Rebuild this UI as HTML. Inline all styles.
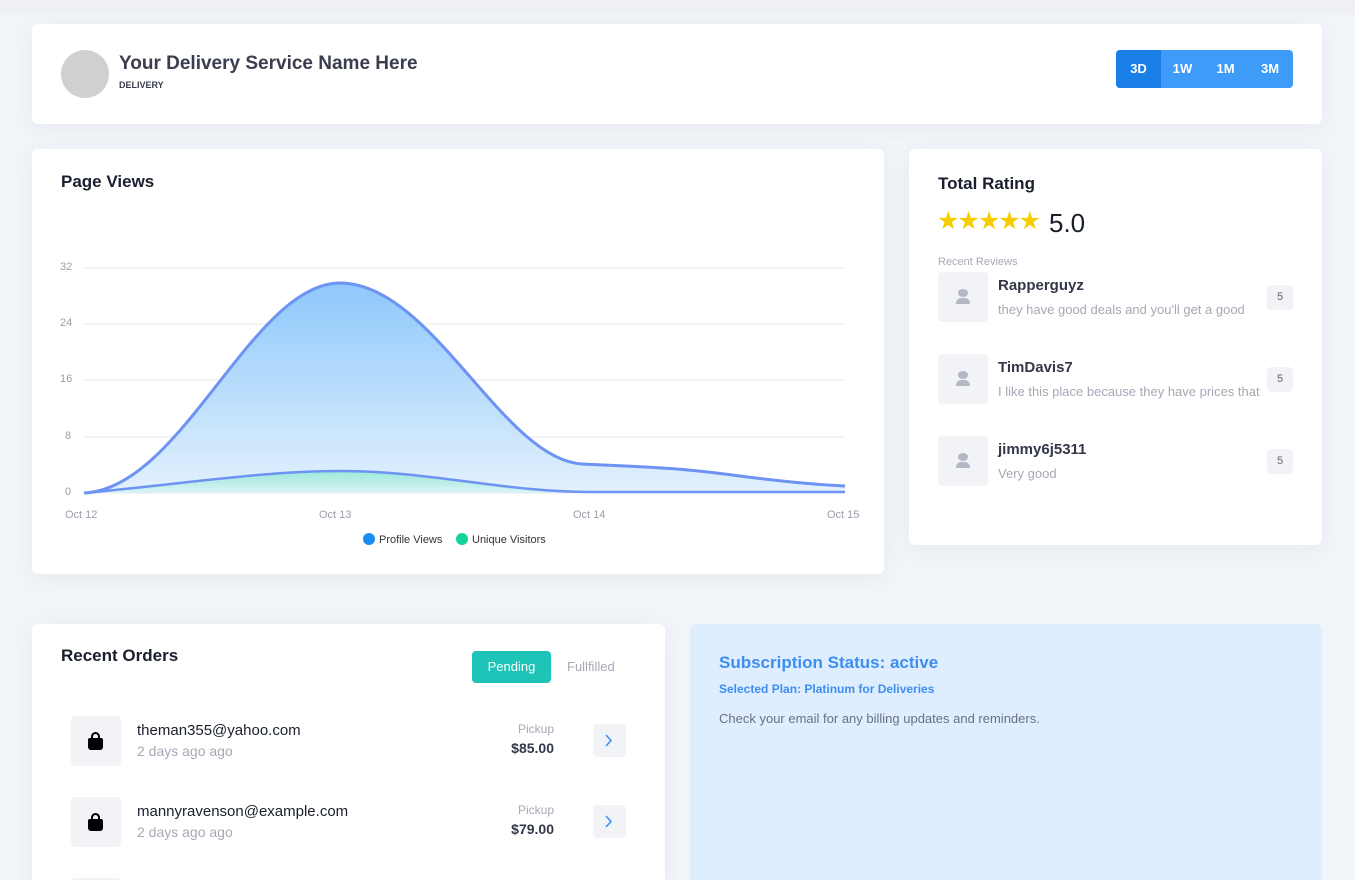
<!DOCTYPE html>
<html style="width:1355px;height:880px;overflow:hidden"><head><meta charset="utf-8"><style>
*{box-sizing:border-box;margin:0;padding:0}
body{width:1355px;height:880px;overflow:hidden;background:#f1f4f8;font-family:"Liberation Sans",sans-serif;color:#1e2633;position:relative}
.card{position:absolute;background:#fff;border-radius:6px;box-shadow:0 4px 20px rgba(60,80,120,.06)}
.h{font-size:17px;font-weight:bold;color:#1a1f2e}
.muted{color:#a6a9b6}
</style></head><body>
<div style="position:absolute;left:0;top:0;width:1355px;height:14px;background:#eef0f4"></div>
<div class="card" style="left:32px;top:24px;width:1290px;height:100px">
 <div style="position:absolute;left:29px;top:26px;width:48px;height:48px;border-radius:50%;background:#d0d0d0"></div>
 <div style="position:absolute;left:87px;top:29px;font-size:19px;font-weight:bold;color:#3a3d4e">Your Delivery Service Name Here</div>
 <div style="position:absolute;left:87px;top:56px;font-size:9px;font-weight:bold;color:#3a3d4e">DELIVERY</div>
 <div style="position:absolute;left:1084px;top:26px;width:177px;height:38px;border-radius:4px;background:#3e9cf8;display:flex;color:#fff;font-size:13px;font-weight:bold;overflow:hidden">
  <div style="width:45px;background:#1a7fe6;text-align:center;line-height:38px">3D</div>
  <div style="width:43px;text-align:center;line-height:38px">1W</div>
  <div style="width:43px;text-align:center;line-height:38px">1M</div>
  <div style="width:46px;text-align:center;line-height:38px">3M</div>
 </div>
</div>
<div class="card" style="left:32px;top:149px;width:852px;height:425px">
 <div class="h" style="position:absolute;left:29px;top:23px">Page Views</div>
 <svg style="position:absolute;left:0;top:0" width="852" height="425">
  <defs><linearGradient id="g" x1="0" y1="0" x2="0" y2="1"><stop offset="0" stop-color="#8ec8fb"/><stop offset="1" stop-color="#e3f1fd"/></linearGradient>
  <linearGradient id="g2" x1="0" y1="0" x2="0" y2="1"><stop offset="0" stop-color="#8ce8d0"/><stop offset="1" stop-color="#d8f3f4"/></linearGradient></defs>
  <g stroke="#e6e8ec" stroke-width="1">
   <line x1="52" y1="119" x2="813" y2="119"/><line x1="52" y1="175" x2="813" y2="175"/><line x1="52" y1="231" x2="813" y2="231"/><line x1="52" y1="288" x2="813" y2="288"/><line x1="52" y1="344" x2="813" y2="344"/>
  </g>
  <path d="M52,344 C150,340 220,134 308,134 C400,134 470,310 550,315 C610,318 640,318 700,326 C760,334 790,336 813,337 L813,344 Z" fill="url(#g)"/>
  <path d="M52,344 C150,340 220,134 308,134 C400,134 470,310 550,315 C610,318 640,318 700,326 C760,334 790,336 813,337" fill="none" stroke="#6d93f3" stroke-width="3"/>
  <path d="M52,344 C150,335 230,322 308,322 C400,322 470,343 559,343 L813,343 L813,344 Z" fill="url(#g2)" opacity=".8"/>
  <path d="M52,344 C150,335 230,322 308,322 C400,322 470,343 559,343 L813,343" fill="none" stroke="#6d93f3" stroke-width="2.5"/>
  <g font-size="11" fill="#9a9ea8" font-family="Liberation Sans">
   <text x="28" y="121">32</text><text x="28" y="177">24</text><text x="28" y="233">16</text><text x="33" y="290">8</text><text x="33" y="346">0</text>
   <text x="33" y="369">Oct 12</text><text x="287" y="369">Oct 13</text><text x="541" y="369">Oct 14</text><text x="795" y="369">Oct 15</text>
  </g>
  <circle cx="337" cy="390" r="6" fill="#1a8cf5"/><text x="347" y="394" font-size="11" fill="#333" font-family="Liberation Sans">Profile Views</text>
  <circle cx="430" cy="390" r="6" fill="#14d49a"/><text x="440" y="394" font-size="11" fill="#333" font-family="Liberation Sans">Unique Visitors</text>
 </svg>
</div>
<div class="card" style="left:909px;top:149px;width:413px;height:396px">
 <div class="h" style="position:absolute;left:29px;top:25px">Total Rating</div>
 <div style="position:absolute;left:28px;top:57px;font-size:25px;color:#f7cc00;letter-spacing:-2px">★★★★★</div>
 <div style="position:absolute;left:140px;top:59px;font-size:26px;color:#1a1f2e">5.0</div>
 <div style="position:absolute;left:29px;top:107px;font-size:11px" class="muted">Recent Reviews</div>
 <div style="position:absolute;left:29px;top:123px;width:380px">
  <div style="position:relative;height:82px">
   <div style="position:absolute;left:0;top:0;width:50px;height:50px;background:#f1f3f7;border-radius:4px"><div style="position:absolute;left:20px;top:17px;width:10px;height:8px;border-radius:50%;background:#b4b8c4"></div><div style="position:absolute;left:18px;top:26px;width:14px;height:6px;border-radius:6px 6px 1px 1px;background:#b4b8c4"></div></div>
   <div style="position:absolute;left:60px;top:5px;font-size:15px;font-weight:bold;color:#333748">Rapperguyz</div>
   <div style="position:absolute;left:60px;top:30px;font-size:13px;width:262px;white-space:nowrap;overflow:hidden" class="muted">they have good deals and you'll get a good</div>
   <div style="position:absolute;left:329px;top:13px;width:26px;height:25px;background:#f1f3f7;border-radius:4px;font-size:11px;color:#666;text-align:center;line-height:25px">5</div>
  </div>
  <div style="position:relative;height:82px">
   <div style="position:absolute;left:0;top:0;width:50px;height:50px;background:#f1f3f7;border-radius:4px"><div style="position:absolute;left:20px;top:17px;width:10px;height:8px;border-radius:50%;background:#b4b8c4"></div><div style="position:absolute;left:18px;top:26px;width:14px;height:6px;border-radius:6px 6px 1px 1px;background:#b4b8c4"></div></div>
   <div style="position:absolute;left:60px;top:5px;font-size:15px;font-weight:bold;color:#333748">TimDavis7</div>
   <div style="position:absolute;left:60px;top:30px;font-size:13px;width:262px;white-space:nowrap;overflow:hidden" class="muted">I like this place because they have prices that</div>
   <div style="position:absolute;left:329px;top:13px;width:26px;height:25px;background:#f1f3f7;border-radius:4px;font-size:11px;color:#666;text-align:center;line-height:25px">5</div>
  </div>
  <div style="position:relative;height:82px">
   <div style="position:absolute;left:0;top:0;width:50px;height:50px;background:#f1f3f7;border-radius:4px"><div style="position:absolute;left:20px;top:17px;width:10px;height:8px;border-radius:50%;background:#b4b8c4"></div><div style="position:absolute;left:18px;top:26px;width:14px;height:6px;border-radius:6px 6px 1px 1px;background:#b4b8c4"></div></div>
   <div style="position:absolute;left:60px;top:5px;font-size:15px;font-weight:bold;color:#333748">jimmy6j5311</div>
   <div style="position:absolute;left:60px;top:30px;font-size:13px" class="muted">Very good</div>
   <div style="position:absolute;left:329px;top:13px;width:26px;height:25px;background:#f1f3f7;border-radius:4px;font-size:11px;color:#666;text-align:center;line-height:25px">5</div>
  </div>
 </div>
</div>
<div class="card" style="left:32px;top:624px;width:633px;height:270px">
 <div class="h" style="position:absolute;left:29px;top:22px">Recent Orders</div>
 <div style="position:absolute;left:440px;top:27px;width:79px;height:32px;background:#1ec4b8;border-radius:4px;color:#fff;font-size:13px;text-align:center;line-height:32px">Pending</div>
 <div style="position:absolute;left:535px;top:35px;font-size:13px" class="muted">Fullfilled</div>
 <div style="position:absolute;left:39px;top:92px;width:50px;height:50px;background:#f1f3f7;border-radius:4px"><div style="position:absolute;left:17px;top:22px;width:15px;height:12px;background:#000;border-radius:2px 2px 3px 3px"></div><div style="position:absolute;left:20px;top:16px;width:9px;height:9px;border:2px solid #000;border-bottom:none;border-radius:5px 5px 0 0"></div></div>
 <div style="position:absolute;left:105px;top:98px;font-size:15px;color:#1a1f2e">theman355@yahoo.com</div>
 <div style="position:absolute;left:105px;top:119px;font-size:14px" class="muted">2 days ago ago</div>
 <div style="position:absolute;right:111px;top:98px;font-size:12px;text-align:right" class="muted">Pickup</div>
 <div style="position:absolute;right:111px;top:116px;font-size:14px;font-weight:bold;color:#333748">$85.00</div>
 <div style="position:absolute;left:561px;top:100px;width:33px;height:33px;background:#f1f3f7;border-radius:4px"><svg width="33" height="33"><path d="M13 11l5 5.5-5 5.5" fill="none" stroke="#3e8ef0" stroke-width="1.5"/></svg></div>
 <div style="position:absolute;left:39px;top:173px;width:50px;height:50px;background:#f1f3f7;border-radius:4px"><div style="position:absolute;left:17px;top:22px;width:15px;height:12px;background:#000;border-radius:2px 2px 3px 3px"></div><div style="position:absolute;left:20px;top:16px;width:9px;height:9px;border:2px solid #000;border-bottom:none;border-radius:5px 5px 0 0"></div></div>
 <div style="position:absolute;left:105px;top:179px;font-size:15px;color:#1a1f2e">mannyravenson@example.com</div>
 <div style="position:absolute;left:105px;top:200px;font-size:14px" class="muted">2 days ago ago</div>
 <div style="position:absolute;right:111px;top:179px;font-size:12px" class="muted">Pickup</div>
 <div style="position:absolute;right:111px;top:197px;font-size:14px;font-weight:bold;color:#333748">$79.00</div>
 <div style="position:absolute;left:561px;top:181px;width:33px;height:33px;background:#f1f3f7;border-radius:4px"><svg width="33" height="33"><path d="M13 11l5 5.5-5 5.5" fill="none" stroke="#3e8ef0" stroke-width="1.5"/></svg></div>
 <div style="position:absolute;left:39px;top:254px;width:50px;height:16px;background:#f1f3f7;border-radius:4px 4px 0 0"></div>
</div>
<div style="position:absolute;left:690px;top:624px;width:632px;height:256px;background:#deeefe;border-radius:6px 6px 0 0">
 <div style="position:absolute;left:29px;top:29px;font-size:17px;font-weight:bold;color:#3e8ef0">Subscription Status: active</div>
 <div style="position:absolute;left:29px;top:58px;font-size:12px;font-weight:bold;color:#3e8ef0">Selected Plan: Platinum for Deliveries</div>
 <div style="position:absolute;left:29px;top:87px;font-size:13px;color:#6b7080">Check your email for any billing updates and reminders.</div>
</div>
</body></html>
